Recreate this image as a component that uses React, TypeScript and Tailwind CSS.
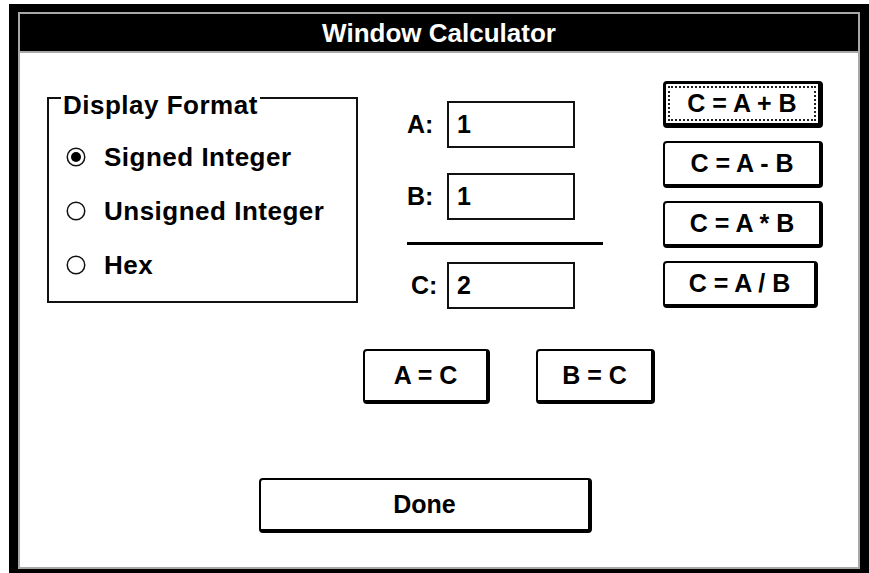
import React from 'react';

const font = "font-['Liberation_Sans',Arial,sans-serif]";

const Radio: React.FC<{ checked?: boolean; label: string }> = ({ checked, label }) => (
    <div className="flex items-center h-[28px]">
        <svg width="20" height="20" viewBox="0 0 20 20" className="shrink-0">
            <circle cx="10" cy="10" r="8.75" fill="#fff" stroke="#111" strokeWidth="1.5" />
            {checked && <circle cx="10" cy="10" r="5" fill="#000" />}
        </svg>
        <span className="ml-[18px] text-[26px] leading-none font-bold tracking-[0.5px] text-black">{label}</span>
    </div>
);

const Field: React.FC<{ label: string; value: string; indent?: boolean }> = ({ label, value, indent }) => (
    <div className="flex items-center">
        <span className={indent ? 'w-[40px] pl-[4px] text-[25px] font-bold leading-none' : 'w-[40px] text-[25px] font-bold leading-none'}>
            {label}
        </span>
        <div className="w-[128px] h-[47px] border-2 border-[#111] bg-white flex items-center pl-[8px] text-[25px] font-bold leading-none">
            {value}
        </div>
    </div>
);

const Button: React.FC<{ label: string; className: string; isDefault?: boolean }> = ({ label, className, isDefault }) => {
    if (isDefault) {
        return (
            <button className={`${className} bg-white border-[3px] border-r-[5px] border-b-[5px] border-black rounded-[4px] p-[2px] flex`}>
                <span className="flex-1 border-2 border-dotted border-[#222] flex items-center justify-center text-[25px] font-bold leading-none">
                    {label}
                </span>
            </button>
        );
    }
    return (
        <button className={`${className} bg-white border-2 border-r-4 border-b-4 border-black rounded-[4px] flex items-center justify-center text-[25px] font-bold leading-none`}>
            {label}
        </button>
    );
};

export default function App() {
    return (
        <div className={`w-[869px] h-[573px] overflow-hidden bg-white pt-[4px] pl-[9px] ${font} text-black`}>
            {/* Window frame */}
            <div className="w-[860px] bg-black px-[9px] pt-[8px] pb-[8px]">
                <div className="border-2 border-[#a8a8a8] bg-white">
                    {/* Title bar */}
                    <div className="h-[39px] bg-black border-b-2 border-[#a8a8a8] flex items-center justify-center">
                        <span className="text-white text-[26px] font-bold leading-none">Window Calculator</span>
                    </div>

                    {/* Client area */}
                    <div className="h-[514px]">
                        <div className="flex pt-[28px]">
                            {/* Display Format group */}
                            <div className="ml-[27px] mt-[16px] w-[311px] h-[206px] flex flex-col">
                                <div className="flex items-start">
                                    <div className="w-[14px] self-stretch border-t-2 border-l-2 border-[#111]" />
                                    <span className="-mt-[5px] px-[2px] text-[26px] font-bold leading-none tracking-[0.5px]">
                                        Display Format
                                    </span>
                                    <div className="flex-1 self-stretch border-t-2 border-r-2 border-[#111]" />
                                </div>
                                <div className="flex-1 border-l-2 border-r-2 border-b-2 border-[#111] pl-[17px] pt-[25px] flex flex-col gap-[26px]">
                                    <Radio checked label="Signed Integer" />
                                    <Radio label="Unsigned Integer" />
                                    <Radio label="Hex" />
                                </div>
                            </div>

                            {/* Operands */}
                            <div className="ml-[49px] w-[196px] pt-[20px] flex flex-col">
                                <Field label="A:" value="1" />
                                <div className="mt-[25px]">
                                    <Field label="B:" value="1" />
                                </div>
                                <div className="mt-[22px] h-[3px] bg-black" />
                                <div className="mt-[17px]">
                                    <Field label="C:" value="2" indent />
                                </div>
                            </div>

                            {/* Operations */}
                            <div className="ml-[60px] flex flex-col gap-[13px]">
                                <Button label="C = A + B" className="w-[160px] h-[47px]" isDefault />
                                <Button label="C = A - B" className="w-[160px] h-[47px]" />
                                <Button label="C = A * B" className="w-[160px] h-[47px]" />
                                <Button label="C = A / B" className="w-[155px] h-[47px]" />
                            </div>
                        </div>

                        <div className="flex pl-[343px] mt-[40px] gap-[46px]">
                            <Button label="A = C" className="w-[127px] h-[55px]" />
                            <Button label="B = C" className="w-[119px] h-[55px]" />
                        </div>

                        <div className="flex pl-[239px] mt-[74px]">
                            <Button label="Done" className="w-[333px] h-[55px]" />
                        </div>
                    </div>
                </div>
            </div>
        </div>
    );
}
